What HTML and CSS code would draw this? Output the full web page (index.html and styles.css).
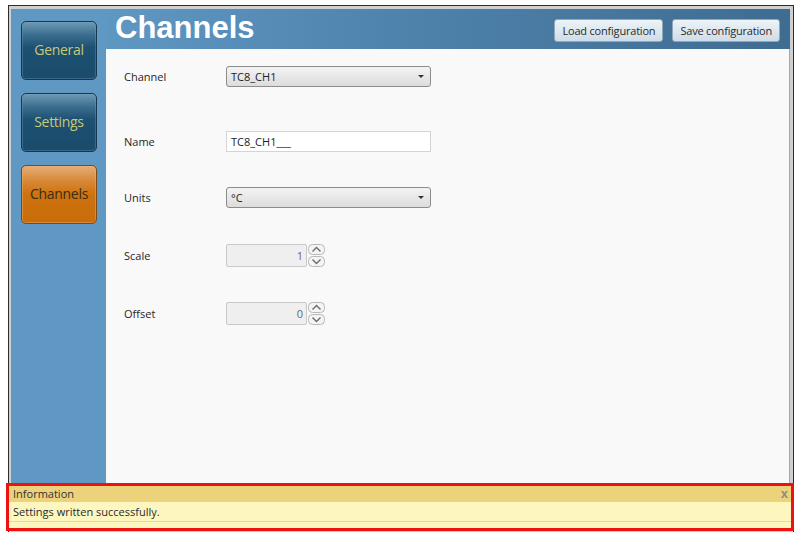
FILE: index.html
```html
<!DOCTYPE html>
<html>
<head>
<meta charset="utf-8">
<link rel="stylesheet" href="styles.css">
</head>
<body>
<div class="frame">
  <div class="app">
    <nav class="sidebar">
      <div class="nav-btn">General</div>
      <div class="nav-btn">Settings</div>
      <div class="nav-btn active">Channels</div>
    </nav>
    <header class="header">
      <h1 class="title">Channels</h1>
      <div class="actions">
        <button class="btn">Load configuration</button>
        <button class="btn">Save configuration</button>
      </div>
    </header>
    <main class="content">
      <div class="row r-channel">
        <span class="label">Channel</span>
        <div class="select"><span>TC8_CH1</span><span class="caret"></span></div>
      </div>
      <div class="row r-name">
        <span class="label">Name</span>
        <div class="input">TC8_CH1___</div>
      </div>
      <div class="row r-units">
        <span class="label">Units</span>
        <div class="select"><span>°C</span><span class="caret"></span></div>
      </div>
      <div class="row r-scale">
        <span class="label">Scale</span>
        <div class="spin">
          <div class="spin-val">1</div>
          <div class="spin-btns">
            <svg width="17" height="11" viewBox="0 0 17 11"><rect x="0.5" y="0.5" width="16" height="10" rx="4" fill="#f4f4f4" stroke="#b8b8b8"/><path d="M4.5 7.5 L8.5 3.5 L12.5 7.5" fill="none" stroke="#6b6b6b" stroke-width="1.4"/></svg>
            <svg width="17" height="11" viewBox="0 0 17 11"><rect x="0.5" y="0.5" width="16" height="10" rx="4" fill="#f4f4f4" stroke="#b8b8b8"/><path d="M4.5 3.5 L8.5 7.5 L12.5 3.5" fill="none" stroke="#6b6b6b" stroke-width="1.4"/></svg>
          </div>
        </div>
      </div>
      <div class="row r-offset">
        <span class="label">Offset</span>
        <div class="spin">
          <div class="spin-val">0</div>
          <div class="spin-btns">
            <svg width="17" height="11" viewBox="0 0 17 11"><rect x="0.5" y="0.5" width="16" height="10" rx="4" fill="#f4f4f4" stroke="#b8b8b8"/><path d="M4.5 7.5 L8.5 3.5 L12.5 7.5" fill="none" stroke="#6b6b6b" stroke-width="1.4"/></svg>
            <svg width="17" height="11" viewBox="0 0 17 11"><rect x="0.5" y="0.5" width="16" height="10" rx="4" fill="#f4f4f4" stroke="#b8b8b8"/><path d="M4.5 3.5 L8.5 7.5 L12.5 3.5" fill="none" stroke="#6b6b6b" stroke-width="1.4"/></svg>
          </div>
        </div>
      </div>
    </main>
  </div>
  <div class="info">
    <div class="info-head"><span>Information</span><span class="close">x</span></div>
    <div class="info-msg">Settings written successfully.</div>
  </div>
</div>
</body>
</html>
```
FILE: styles.css
```css
html, body {
  margin: 0;
  padding: 0;
  background: #ffffff;
  font-family: "Open Sans", "Noto Sans", sans-serif;
  font-size: 11px;
  color: #2b2b2b;
}

.frame {
  margin: 5px 0 0 8px;
  width: 786px;
  height: 527px;
  box-sizing: border-box;
  border: 1px solid #2c2c2c;
  border-bottom: none;
  background: #cfcfcf;
  padding: 3px 3px 0 2px;
  display: flex;
  flex-direction: column;
}

.app {
  height: 474px;
  display: grid;
  grid-template-columns: 95px 1fr;
  grid-template-rows: 40px 1fr;
  background: #6098c4;
}

.sidebar {
  grid-row: 1 / 3;
  grid-column: 1;
  display: flex;
  flex-direction: column;
  gap: 13px;
  padding: 12px 0 0 10px;
}

.nav-btn {
  width: 76px;
  height: 59px;
  border: 1px solid #16384f;
  border-radius: 5px;
  background: linear-gradient(to bottom, #6f9ab4 0%, #3c6f8f 22%, #1d5071 45%, #1a4b6b 100%);
  box-shadow: inset 0 0 0 1px rgba(120, 160, 190, 0.35);
  color: #c9c97a;
  font-size: 14px;
  letter-spacing: -0.3px;
  display: flex;
  align-items: center;
  justify-content: center;
  padding-bottom: 2px;
  box-sizing: border-box;
}

.nav-btn.active {
  border-color: #7a4a18;
  background: linear-gradient(to bottom, #e6ad77 0%, #d88a3a 25%, #cd720e 50%, #c96c0a 100%);
  box-shadow: inset 0 0 0 1px rgba(240, 180, 120, 0.4);
  color: #3a2c14;
}

.header {
  grid-row: 1;
  grid-column: 2;
  background: linear-gradient(to right, #5f97c3 0%, #4f84ae 40%, #3f6c91 100%);
  display: flex;
  align-items: flex-start;
  justify-content: space-between;
  padding: 0 10px 0 9px;
}

.title {
  margin: 1px 0 0 0;
  font-family: "Liberation Sans", Arial, sans-serif;
  font-weight: bold;
  font-size: 31px;
  line-height: 36px;
  color: #ffffff;
}

.actions {
  display: flex;
  gap: 9px;
  margin-top: 10px;
}

.btn {
  height: 23px;
  padding: 0 7px;
  border: 1px solid #8fa8ba;
  border-radius: 3px;
  background: linear-gradient(to bottom, #eef4f8 0%, #dde8f0 50%, #cfdde8 100%);
  font-family: "Open Sans", "Noto Sans", sans-serif;
  font-size: 11px;
  color: #2a2a2a;
  letter-spacing: -0.2px;
}

.content {
  grid-row: 2;
  grid-column: 2;
  background: #f9f9f9;
  border-right: 1px solid #a8a8a8;
  padding: 16px 0 0 18px;
  display: flex;
  flex-direction: column;
}

.row {
  display: flex;
  align-items: center;
  height: 22px;
}

.r-name { margin-top: 43px; }
.r-units { margin-top: 34px; }
.r-scale { margin-top: 35px; height: 24px; }
.r-offset { margin-top: 34px; height: 24px; }

.label {
  width: 102px;
  color: #262626;
}

.select {
  width: 205px;
  height: 21px;
  box-sizing: border-box;
  border: 1px solid #8c8c8c;
  border-radius: 3px;
  background: linear-gradient(to bottom, #f3f3f3 0%, #e8e8e8 50%, #dcdcdc 100%);
  display: flex;
  align-items: center;
  justify-content: space-between;
  padding: 0 6px 0 4px;
  color: #222;
}

.caret {
  width: 0;
  height: 0;
  border-left: 3px solid transparent;
  border-right: 3px solid transparent;
  border-top: 3px solid #333;
}

.input {
  width: 205px;
  height: 21px;
  box-sizing: border-box;
  border: 1px solid #d4d4d4;
  background: #ffffff;
  display: flex;
  align-items: center;
  padding-left: 4px;
  color: #222;
}

.spin {
  display: flex;
  align-items: center;
}

.spin-val {
  width: 81px;
  height: 23px;
  box-sizing: border-box;
  border: 1px solid #c9c9c9;
  border-radius: 2px;
  background: #efefef;
  color: #6a6a6a;
  display: flex;
  align-items: center;
  justify-content: flex-end;
  padding-right: 3px;
}

.spin-btns {
  display: flex;
  flex-direction: column;
  gap: 1px;
  margin-left: 1px;
}

.spin-btns svg { display: block; }

.info {
  margin: 0 -4px 0 -5px;
  height: 48px;
  box-sizing: border-box;
  border: 3px solid #ee1111;
  background: #fdf6bf;
  display: flex;
  flex-direction: column;
}

.info-head {
  height: 15px;
  background: #ebd27b;
  display: flex;
  align-items: center;
  justify-content: space-between;
  padding: 0 3px 0 4px;
  color: #333;
  border-bottom: 1px solid #e2d59a;
}

.close {
  font-family: "Liberation Sans", Arial, sans-serif;
  font-weight: bold;
  font-size: 13px;
  color: #8a8a8a;
}

.info-msg {
  height: 19px;
  display: flex;
  align-items: center;
  padding-left: 4px;
  color: #2a2a2a;
  border-bottom: 1px solid #d8d8b8;
}
```
